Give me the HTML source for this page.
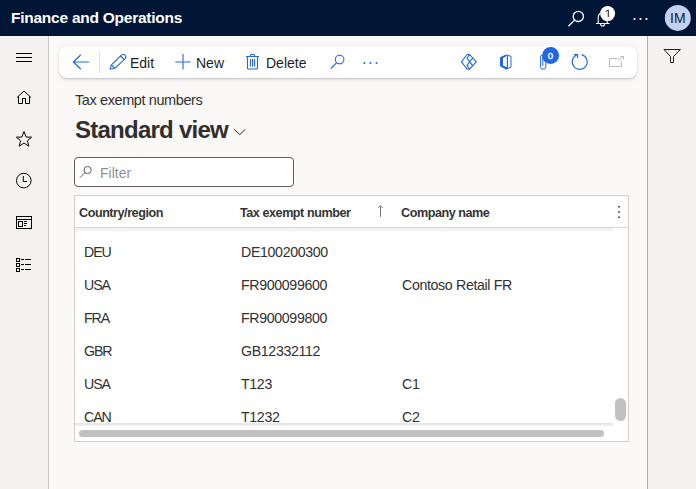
<!DOCTYPE html>
<html><head><meta charset="utf-8">
<style>
*{box-sizing:border-box;margin:0;padding:0}
html,body{width:696px;height:489px;overflow:hidden;background:#faf9f8;font-family:"Liberation Sans",sans-serif;color:#323130}
.abs{position:absolute}
svg{position:absolute;overflow:visible}
#hdr{left:0;top:0;width:696px;height:36px;background:#011536}
#title{left:11px;top:8.5px;color:#fff;font-weight:bold;font-size:15.5px;letter-spacing:-0.25px;line-height:18px;white-space:nowrap}
#nav{left:0;top:36px;width:49px;height:453px;background:#f3f2f1;border-right:1px solid #c8c6c4}
#rpane{left:647px;top:36px;width:49px;height:453px;background:#f3f2f1;border-left:1px solid #b3b0ad}
#tb{left:59px;top:46px;width:578px;height:32px;background:#fff;border-radius:8px;box-shadow:0 1.6px 3.6px rgba(0,0,0,.12),0 0.3px 0.9px rgba(0,0,0,.1)}
.tbt{font-size:14px;line-height:16px;color:#201f1e;white-space:nowrap;top:55px}
#crumb{left:75px;top:91.5px;font-size:14.5px;letter-spacing:-0.4px;line-height:16px;color:#323130;white-space:nowrap}
#view{left:75px;top:116px;font-size:24px;line-height:28px;letter-spacing:-0.75px;font-weight:bold;color:#302f2e;white-space:nowrap}
#filter{left:74px;top:157px;width:220px;height:30px;border:1px solid #605e5c;border-radius:4px;background:#fff}
#ftxt{left:100px;top:165px;font-size:14px;line-height:16px;color:#949290}
#grid{left:74px;top:195px;width:555px;height:247px;background:#fff;border:1px solid #d2d0ce}
#ghead{left:75px;top:196px;width:553px;height:32px;background:#fff;border-bottom:1px solid #d8d8d8}
#gshadow{left:75px;top:228px;width:538px;height:5px;background:linear-gradient(rgba(0,0,0,.07),rgba(0,0,0,0))}
.hd{font-size:12.6px;line-height:14px;font-weight:bold;letter-spacing:-0.45px;color:#353433;white-space:nowrap;top:206px}
.c1{letter-spacing:-1.1px!important}
.cell{font-size:14.2px;letter-spacing:-0.35px;line-height:16px;color:#323130;white-space:nowrap}
#hline{left:75px;top:423px;width:538px;height:3px;background:linear-gradient(#e4e4e4,#f2f2f2)}
#hthumb{left:79px;top:430px;width:525px;height:7px;border-radius:3.5px;background:#c1c1c1}
#vthumb{left:615px;top:398px;width:11px;height:23px;border-radius:5.5px;background:#c1c1c1}
</style></head><body>
<div id="hdr" class="abs"></div>
<div id="title" class="abs">Finance and Operations</div>

<!-- header icons -->
<svg width="696" height="36" style="left:0;top:0">
  <g fill="none" stroke="#fff" stroke-width="1.3">
    <circle cx="578.3" cy="16.4" r="5.1"/>
    <path d="M574.6 20.1 L568.4 26.3"/>
  </g>
  <g fill="none" stroke="#fff" stroke-width="1.1">
    <path d="M596 23.5 H609.5 M598.2 23.5 V17.5 A5 5 0 0 1 602 12.6 M607.2 20.5 V23.5"/>
    <path d="M600.6 24 A2 2 0 0 0 604.6 24"/>
  </g>
  <circle cx="607.6" cy="13.6" r="7.5" fill="#fff"/>
  <path d="M605.8 11.6 L608.3 10 V17.1" fill="none" stroke="#201f1e" stroke-width="1"/>
  <circle cx="634.5" cy="19" r="1.1" fill="#fff"/>
  <circle cx="640.5" cy="19" r="1.1" fill="#fff"/>
  <circle cx="646.5" cy="19" r="1.1" fill="#fff"/>
  <circle cx="677.8" cy="17.9" r="13" fill="#c2d1f2"/>
  <text x="677.8" y="22.9" font-size="14" font-family="Liberation Sans" text-anchor="middle" fill="#201f1e">IM</text>
</svg>

<div id="nav" class="abs"></div>
<div id="rpane" class="abs"></div>

<!-- nav icons -->
<svg width="48" height="300" style="left:0;top:0">
  <g fill="none" stroke="#000" stroke-width="1">
    <path d="M16 53.5 H32 M16 57.5 H32 M16 61.5 H32"/>
    <path d="M17 97.5 L24 91 L31 97.5 M18.5 96.5 V103.5 H22.5 V98.5 H25.5 V103.5 H29.5 V96.5"/>
    <path d="M24 131.5 L26.1 137 L31.6 137.2 L27.4 140.8 L28.8 146.2 L24 143.1 L19.2 146.2 L20.6 140.8 L16.4 137.2 L21.9 137 Z"/>
    <circle cx="23.8" cy="180.6" r="7.3"/>
    <path d="M23.3 176 V181.5 H27"/>
    <rect x="16.5" y="216.5" width="15" height="12"/>
    <path d="M16.5 219.5 H31.5"/>
    <rect x="18.5" y="221.5" width="4" height="5"/>
    <path d="M24 221.5 H27 M24 223.5 H27 M24 225.5 H26"/>
    <rect x="16.5" y="258.5" width="3" height="3"/>
    <rect x="16.5" y="263.5" width="3" height="3"/>
    <rect x="16.5" y="268.5" width="3" height="3"/>
    <path d="M21 259.5 H24 M25 259.5 H31 M21 264.5 H24 M25 264.5 H31 M21 269.5 H24 M25 269.5 H31"/>
  </g>
</svg>

<!-- right pane filter icon -->
<svg width="696" height="100" style="left:0;top:0">
  <path d="M664 49.5 H680.5 L673.5 56.5 V62.5 H670.5 V56.5 Z" fill="none" stroke="#201f1e" stroke-width="1"/>
</svg>

<div id="tb" class="abs"></div>
<!-- toolbar icons -->
<svg width="696" height="100" style="left:0;top:0">
  <g fill="none" stroke="#2266e3" stroke-width="1.2" stroke-linecap="round" stroke-linejoin="round">
    <path d="M80.4 55.2 L73.4 62 L80.4 68.8 M73.6 62 H88.6"/>
  </g>
  <path d="M99.5 51 V73" stroke="#e1dfdd" stroke-width="1"/>
  <g fill="none" stroke="#2266e3" stroke-width="1.1" stroke-linejoin="round">
    <path d="M110.2 69.2 L111.2 65.2 L121.6 54.9 A2.65 2.65 0 0 1 125.3 58.6 L114.8 68.3 Z M120.6 56 L124.1 59.5 M111.6 65.2 L114.4 68"/>
    <path d="M175.3 62 H190.7 M183 54 V69.6"/>
    <path d="M246 56.5 H259 M250.5 56.5 V55.5 Q250.5 54.5 251.5 54.5 H253.5 Q254.5 54.5 254.5 55.5 V56.5 M247.5 56.5 V68 Q247.5 69 248.5 69 H256.5 Q257.5 69 257.5 68 V56.5 M250.5 59 V66.6 M252.5 59 V66.6 M254.5 59 V66.6"/>
    <circle cx="339.6" cy="59.6" r="4.3"/>
    <path d="M336.5 62.8 L330.8 68.5"/>
  </g>
  <g fill="#2266e3">
    <circle cx="364.3" cy="63" r="1"/>
    <circle cx="370.4" cy="63" r="1"/>
    <circle cx="376.5" cy="63" r="1"/>
  </g>
  <!-- power apps diamond -->
  <g fill="none" stroke="#2266e3" stroke-width="1.1" stroke-linejoin="round">
    <path d="M467 54.5 L461.5 61.8 L467 69.2 H469.6 L476.2 61.8 L469.6 54.5 Z M469.6 54.5 L467 58.2 L472.6 65.6 M472.6 58 L467 65.4 L469.6 69.2"/>
  </g>
  <!-- office -->
  <path d="M500 57.2 L506 54.6 L507.2 55.6 L503 58.2 V65.4 L500 66.2 Z M500 66.2 L503 65.4 L507.5 67.4 V69 L506 69.4 Z" fill="#2266e3"/>
  <path d="M506.5 55 L511 56.3 V67.3 L506.5 68.9" fill="none" stroke="#2266e3" stroke-width="1"/>
  <path d="M507.4 55.8 V68.2" fill="none" stroke="#2266e3" stroke-width="1.2"/>
  <!-- paperclip -->
  <path d="M545.8 60 V66.7 A2.6 2.6 0 0 1 540.6 66.7 V56.3 A1.1 1.1 0 0 1 542.8 56.3 V65.8" fill="none" stroke="#2266e3" stroke-width="1"/>
  <circle cx="550.6" cy="55.4" r="8.5" fill="#2266e3"/>
  <text x="550.4" y="58.8" font-size="9.6" font-family="Liberation Sans" text-anchor="middle" fill="#fff" stroke="#fff" stroke-width="0.35">0</text>
  <!-- refresh -->
  <g fill="none" stroke="#2266e3" stroke-width="1.1" stroke-linecap="butt">
    <path d="M581.6 54.64 A7.5 7.5 0 1 1 577.2 54.83"/>
    <path d="M574 54.5 H577.6 V58"/>
  </g>
  <!-- open in new -->
  <g fill="none" stroke="#bdbbb9" stroke-width="1">
    <path d="M618 58.5 H609.5 V66.5 H621.5 V61.5"/>
    <path d="M618.6 60.4 L623.2 56.2 M620.5 56.5 H623.5 V59.5"/>
  </g>
</svg>
<div class="abs tbt" style="left:130px">Edit</div>
<div class="abs tbt" style="left:196px">New</div>
<div class="abs tbt" style="left:266px">Delete</div>

<div id="crumb" class="abs">Tax exempt numbers</div>
<div id="view" class="abs">Standard view</div>
<svg width="696" height="200" style="left:0;top:0">
  <path d="M234.3 129.3 L239.8 134.6 L245.3 129.3" fill="none" stroke="#201f1e" stroke-width="1"/>
</svg>

<div id="filter" class="abs"></div>
<svg width="696" height="200" style="left:0;top:0">
  <circle cx="87.6" cy="170" r="3.6" fill="none" stroke="#605e5c" stroke-width="1"/>
  <path d="M85 172.6 L80.2 177.4" stroke="#605e5c" stroke-width="1" stroke-linecap="round"/>
</svg>
<div id="ftxt" class="abs">Filter</div>

<div id="grid" class="abs"></div>
<div id="ghead" class="abs"></div>
<div id="gshadow" class="abs"></div>
<div class="abs hd" style="left:79px">Country/region</div>
<div class="abs hd" style="left:240px">Tax exempt number</div>
<div class="abs hd" style="left:401px">Company name</div>
<svg width="696" height="300" style="left:0;top:0">
  <path d="M380.5 205.8 V216.8 M378.2 207.9 L380.5 205.6 L382.8 207.9" fill="none" stroke="#7a7876" stroke-width="1"/>
  <g fill="#605e5c">
    <rect x="618" y="206" width="2" height="1.6"/>
    <rect x="618" y="211.2" width="2" height="1.6"/>
    <rect x="618" y="216.4" width="2" height="1.6"/>
  </g>
</svg>

<div class="abs cell c1" style="left:84px;top:244px">DEU</div>
<div class="abs cell" style="left:241px;top:244px">DE100200300</div>
<div class="abs cell c1" style="left:84px;top:277px">USA</div>
<div class="abs cell" style="left:241px;top:277px">FR900099600</div>
<div class="abs cell" style="left:402px;top:277px">Contoso Retail FR</div>
<div class="abs cell c1" style="left:84px;top:310px">FRA</div>
<div class="abs cell" style="left:241px;top:310px">FR900099800</div>
<div class="abs cell c1" style="left:84px;top:343px">GBR</div>
<div class="abs cell" style="left:241px;top:343px">GB12332112</div>
<div class="abs cell c1" style="left:84px;top:376px">USA</div>
<div class="abs cell" style="left:241px;top:376px">T123</div>
<div class="abs cell" style="left:402px;top:376px">C1</div>
<div class="abs cell c1" style="left:84px;top:409px">CAN</div>
<div class="abs cell" style="left:241px;top:409px">T1232</div>
<div class="abs cell" style="left:402px;top:409px">C2</div>

<div id="hline" class="abs"></div>
<div id="hthumb" class="abs"></div>
<div id="vthumb" class="abs"></div>
</body></html>
